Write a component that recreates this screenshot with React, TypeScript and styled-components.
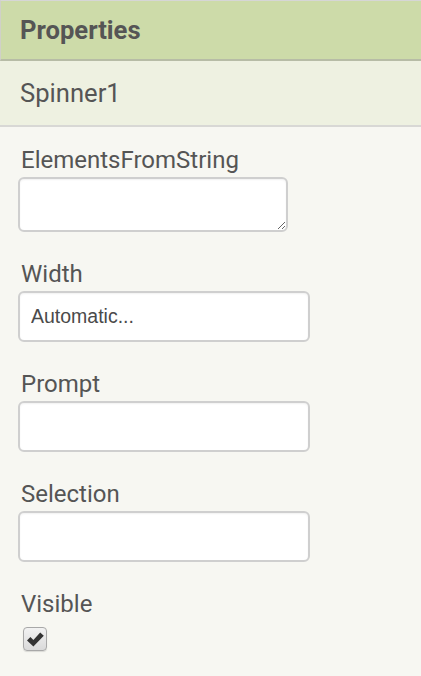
import React from "react";
import styled, { createGlobalStyle } from "styled-components";

const Global = createGlobalStyle`
  html, body { margin: 0; padding: 0; background: #f7f7f2; }
  body { font-family: Roboto, "Noto Sans", sans-serif; color: #555; }
`;

const Panel = styled.div`
  width: 421px;
  min-height: 676px;
  background: #f7f7f2;
  display: flex;
  flex-direction: column;
`;

const Header = styled.div`
  height: 58px;
  background: #cddba9;
  border-top: 1px solid #d6d6d6;
  border-left: 1px solid #d0d0c8;
  border-bottom: 2px solid #b7bca6;
  display: flex;
  align-items: center;
  padding-left: 19px;
  font-size: 25.6px;
  font-weight: 700;
  color: #555;
`;

const SubHeader = styled.div`
  height: 64px;
  background: #eef1e1;
  border-bottom: 2px solid #d8d8d5;
  display: flex;
  align-items: center;
  padding-left: 20px;
  font-size: 25.6px;
  color: #555;
`;

const Body = styled.div`
  display: flex;
  flex-direction: column;
  padding: 22px 0 0 18px;
`;

const Property = styled.div`
  display: flex;
  flex-direction: column;
  align-items: flex-start;
  margin-bottom: 31px;
`;

const Label = styled.div`
  height: 22px;
  line-height: 22px;
  font-size: 24px;
  color: #555;
  margin: 0 0 6px 3px;
`;

const TextArea = styled.textarea`
  box-sizing: border-box;
  width: 270px;
  height: 55px;
  margin: 0;
  border: 2px solid #cfcfcf;
  border-radius: 6px;
  background: #fff;
  box-shadow: inset 0 1px 2px rgba(0, 0, 0, 0.06);
  font-family: "Liberation Sans", Arial, sans-serif;
  font-size: 19px;
  outline: none;
`;

const Input = styled.input`
  box-sizing: border-box;
  width: 292px;
  height: 51px;
  margin: 0;
  padding: 0 11px;
  border: 2px solid #cfcfcf;
  border-radius: 6px;
  background: #fff;
  box-shadow: inset 0 1px 2px rgba(0, 0, 0, 0.06);
  font-family: "Liberation Sans", Arial, sans-serif;
  font-size: 19.5px;
  color: #4a4a4a;
  outline: none;
`;

const CheckBox = styled.span`
  box-sizing: border-box;
  display: flex;
  align-items: center;
  justify-content: center;
  width: 24px;
  height: 24px;
  margin: 6px 0 0 5px;
  border: 1px solid #a8a8a8;
  border-radius: 4px;
  background: linear-gradient(#f2f2f2, #dadada);
  box-shadow: 0 1px 1px rgba(0, 0, 0, 0.12);
`;

const CheckMark = () => (
  <svg width="19" height="17" viewBox="0 0 19 17">
    <path d="M1 9.4 L4.4 6.1 L7.4 9.1 L14.2 1.5 L17.8 4.8 L7.4 15.6 Z" fill="#333" />
  </svg>
);

export default function App() {
  return (
    <>
      <Global />
      <Panel>
        <Header>Properties</Header>
        <SubHeader>Spinner1</SubHeader>
        <Body>
          <Property>
            <Label>ElementsFromString</Label>
            <TextArea />
          </Property>
          <Property>
            <Label>Width</Label>
            <Input defaultValue="Automatic..." readOnly />
          </Property>
          <Property>
            <Label>Prompt</Label>
            <Input />
          </Property>
          <Property>
            <Label>Selection</Label>
            <Input />
          </Property>
          <Property>
            <Label>Visible</Label>
            <CheckBox>
              <CheckMark />
            </CheckBox>
          </Property>
        </Body>
      </Panel>
    </>
  );
}
